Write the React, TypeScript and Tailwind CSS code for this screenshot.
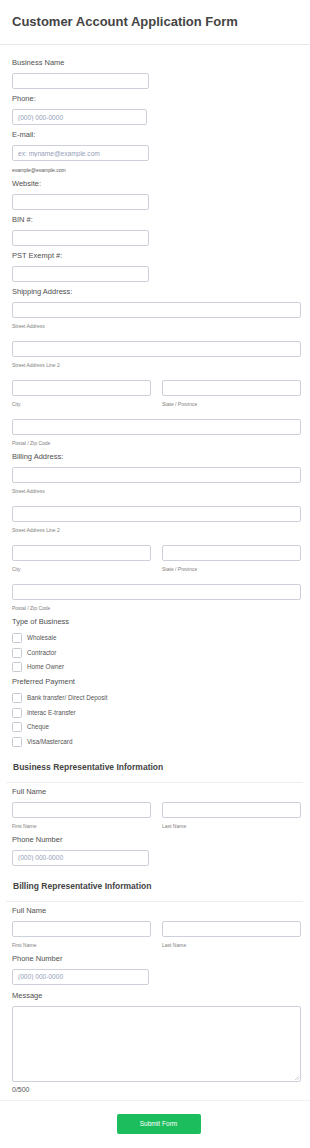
const inputCls =
  "block h-[16px] rounded-[2px] border border-[#cdd0db] bg-white px-[5px] text-[6.6px] text-[#2c3345] outline-none placeholder:text-[#94a0b8]";

function Label({ children, className = "" }: { children: React.ReactNode; className?: string }) {
  return <div className={`h-[10px] text-[7.5px] leading-[10px] text-[#505050] ${className}`}>{children}</div>;
}

function Sub({ children }: { children: React.ReactNode }) {
  return <div className="mt-[4px] h-[8px] text-[5px] leading-[8px] text-[#808080]">{children}</div>;
}

function Field({ label, placeholder, width = "w-[137px]", first = false, small = false }: { label: string; placeholder?: string; width?: string; first?: boolean; small?: boolean }) {
  return (
    <div className={first ? "" : "mt-[5px]"}>
      <Label className={small ? "text-[6.8px]" : ""}>{label}</Label>
      <input className={`${inputCls} mt-[5px] ${width}`} placeholder={placeholder} />
    </div>
  );
}

function Address({ label }: { label: string }) {
  return (
    <div className="mt-[5px]">
      <Label>{label}</Label>
      <div className="mt-[5px] flex flex-col gap-[11px]">
        <div>
          <input className={`${inputCls} w-full`} />
          <Sub>Street Address</Sub>
        </div>
        <div>
          <input className={`${inputCls} w-full`} />
          <Sub>Street Address Line 2</Sub>
        </div>
        <div className="grid grid-cols-2 gap-x-[11px]">
          <div>
            <input className={`${inputCls} w-full`} />
            <Sub>City</Sub>
          </div>
          <div>
            <input className={`${inputCls} w-full`} />
            <Sub>State / Province</Sub>
          </div>
        </div>
        <div>
          <input className={`${inputCls} w-full`} />
          <Sub>Postal / Zip Code</Sub>
        </div>
      </div>
    </div>
  );
}

function Checks({ label, items }: { label: string; items: string[] }) {
  return (
    <div className="mt-[5px]">
      <Label>{label}</Label>
      <div className="mt-[6px] flex flex-col gap-[4.5px]">
        {items.map((item) => (
          <div key={item} className="flex h-[10px] items-center gap-[5px]">
            <span className="h-[10px] w-[10px] shrink-0 rounded-[1.5px] border border-[#c6cad5] bg-white" />
            <span className="text-[6.3px] leading-[10px] text-[#555]">{item}</span>
          </div>
        ))}
      </div>
    </div>
  );
}

function Section({ title }: { title: string }) {
  return (
    <div className="ml-[-6px] mr-[-2px] mt-[14px] border-b border-[#eceef2] px-[7px] pb-[9px]">
      <h2 className="text-[8.5px] font-bold leading-[12px] text-[#444]">{title}</h2>
    </div>
  );
}

function FullName() {
  return (
    <div className="mt-[4px]">
      <Label>Full Name</Label>
      <div className="mt-[5px] grid grid-cols-2 gap-x-[11px]">
        <div>
          <input className={`${inputCls} w-full`} />
          <Sub>First Name</Sub>
        </div>
        <div>
          <input className={`${inputCls} w-full`} />
          <Sub>Last Name</Sub>
        </div>
      </div>
    </div>
  );
}

export default function App() {
  return (
    <div className="h-[1148px] w-[310px] overflow-hidden bg-white font-['Liberation_Sans',Arial,sans-serif]">
      <header className="flex h-[45px] items-center border-b border-[#e6e7eb] px-3">
        <h1 className="text-[13px] font-bold text-[#444]">Customer Account Application Form</h1>
      </header>

      <form className="pl-3 pr-[9px] pt-[13px]">
        <Field first small label="Business Name" />
        <Field label="Phone:" placeholder="(000) 000-0000" width="w-[135px]" />
        <Field label="E-mail:" placeholder="ex: myname@example.com" />
        <div className="mt-[5px] h-[8px] text-[5px] leading-[8px] text-[#555]">example@example.com</div>
        <Field label="Website:" />
        <Field label="BIN #:" />
        <Field label="PST Exempt #:" />
        <Address label="Shipping Address:" />
        <Address label="Billing Address:" />
        <Checks label="Type of Business" items={["Wholesale", "Contractor", "Home Owner"]} />
        <Checks label="Preferred Payment" items={["Bank transfer/ Direct Deposit", "Interac E-transfer", "Cheque", "Visa/Mastercard"]} />

        <Section title="Business Representative Information" />
        <FullName />
        <Field label="Phone Number" placeholder="(000) 000-0000" />

        <Section title="Billing Representative Information" />
        <FullName />
        <Field label="Phone Number" placeholder="(000) 000-0000" />

        <div className="mt-[6px]">
          <Label>Message</Label>
          <div className="relative mt-[5px]">
            <textarea className="block h-[76px] w-full resize-none rounded-[2px] border border-[#cdd0db] bg-white text-[7px] outline-none" />
            <svg className="absolute bottom-[2px] right-[2px] h-[4px] w-[4px]" viewBox="0 0 4 4">
              <path d="M4 0L0 4M4 2L2 4" stroke="#c4c4c4" strokeWidth="0.7" />
            </svg>
          </div>
          <div className="mt-[4px] h-[8px] text-[7px] leading-[8px] text-[#555]">0/500</div>
        </div>
        <div className="-ml-3 mr-[-9px] mt-[6px] border-t border-[#eef0f3]" />
        <div className="mt-[13px] flex justify-center pl-[4px]">
          <button type="button" className="h-[20px] w-[84px] rounded-[2px] bg-[#1cbd5c] text-[6.6px] text-white">
            Submit Form
          </button>
        </div>
      </form>
    </div>
  );
}
